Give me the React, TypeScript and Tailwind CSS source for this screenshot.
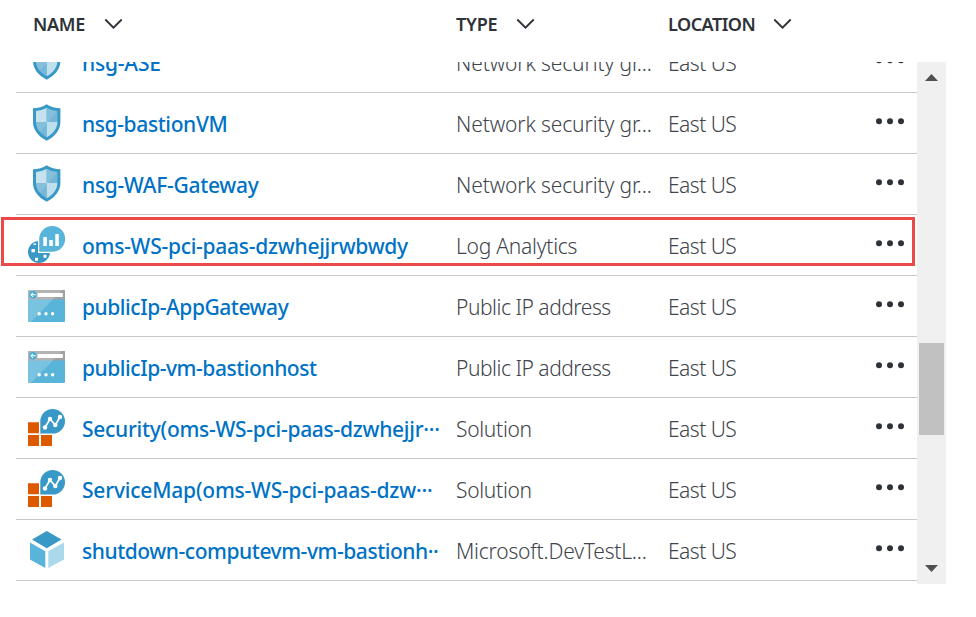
import React from "react";

type IconKind = "shield" | "oms" | "ip" | "solution" | "cube";

interface Resource {
  name: string;
  tracking: string;
  type: string;
  typeTracking: string;
  icon: IconKind;
  selected?: boolean;
}

const resources: Resource[] = [
  { name: "nsg-ASE", tracking: "tracking-[-0.2px]", type: "Network security gr...", typeTracking: "tracking-[-0.12px]", icon: "shield" },
  { name: "nsg-bastionVM", tracking: "tracking-[-0.38px]", type: "Network security gr...", typeTracking: "tracking-[-0.12px]", icon: "shield" },
  { name: "nsg-WAF-Gateway", tracking: "tracking-[-0.27px]", type: "Network security gr...", typeTracking: "tracking-[-0.12px]", icon: "shield" },
  { name: "oms-WS-pci-paas-dzwhejjrwbwdy", tracking: "tracking-[-0.26px]", type: "Log Analytics", typeTracking: "tracking-[-0.25px]", icon: "oms", selected: true },
  { name: "publicIp-AppGateway", tracking: "tracking-[-0.45px]", type: "Public IP address", typeTracking: "tracking-[-0.47px]", icon: "ip" },
  { name: "publicIp-vm-bastionhost", tracking: "tracking-[-0.45px]", type: "Public IP address", typeTracking: "tracking-[-0.47px]", icon: "ip" },
  { name: "Security(oms-WS-pci-paas-dzwhejjr···", tracking: "tracking-[-0.27px]", type: "Solution", typeTracking: "tracking-[-0.3px]", icon: "solution" },
  { name: "ServiceMap(oms-WS-pci-paas-dzw···", tracking: "tracking-[-0.2px]", type: "Solution", typeTracking: "tracking-[-0.3px]", icon: "solution" },
  { name: "shutdown-computevm-vm-bastionh··", tracking: "tracking-[-0.45px]", type: "Microsoft.DevTestL...", typeTracking: "tracking-[-0.2px]", icon: "cube" },
];

function ResourceIcon({ kind }: { kind: IconKind }) {
  return (
    <svg width="37" height="37" viewBox="0 0 37 37" className="block">
      {kind === "shield" && (
        <>
          <path d="M18.7 0.3C15 3 10 4.300 5 4.300V18C5 26 10.500 32.500 18.700 36.700C27 32.500 32.400 26 32.400 18V4.300C27.400 4.300 22.400 3 18.700 0.300Z" fill="#3999c6" />
          <path d="M18.700 3.800C15.500 5.600 11.800 6.700 8 6.900V18H18.700Z" fill="#bfdfed" />
          <path d="M18.700 3.800C21.900 5.600 25.600 6.700 29.400 6.900V18H18.700Z" fill="#74b7d7" />
          <path d="M8 18H18.700V33.300C12.500 29.800 8 24.500 8 18Z" fill="#74b7d7" />
          <path d="M18.700 18H29.400C29.400 24.500 24.900 29.800 18.700 33.300Z" fill="#bfdfed" />
          <path d="M18.700 3.800C15.500 5.600 11.800 6.700 8 6.900V18C8 22 9.800 25.500 12 28L29.400 7C25.600 6.700 21.900 5.600 18.700 3.800Z" fill="#fff" opacity=".12" />
        </>
      )}
      {kind === "oms" && (
        <>
          <circle cx="11" cy="26" r="11" fill="#3999c6" />
          <path d="M24.300 0A12.900 12.900 0 1 1 24.300 25.800H11.200V12.900A13 13 0 0 1 24.300 0Z" fill="#59b4d9" stroke="#fff" strokeWidth="2.400" paintOrder="stroke" />
          <path d="M15.300 11H18.800V20H15.300ZM21.300 14H24.800V20H21.300ZM27.300 8H30.800V20H27.300Z" fill="#fff" />
          <path d="M3.500 23H7V26.200H3.500ZM7 31.700H10V34.800H7ZM15.500 28.700H18.500V31.800H15.500ZM5.500 17.500H8V19H5.500Z" fill="#fff" />
        </>
      )}
      {kind === "ip" && (
        <>
          <rect y="3" width="37" height="32" rx="1" fill="#59b4d9" />
          <path d="M1 3H36Q37 3 37 4V12.500H0V4Q0 3 1 3Z" fill="#a0a1a2" />
          <path d="M1 3H34L3 35H1Q0 35 0 34V4Q0 3 1 3Z" fill="#fff" opacity=".2" />
          <rect x="9.500" y="6" width="25.300" height="4" fill="#fff" />
          <circle cx="4.900" cy="7.800" r="3.700" fill="#3eb0d9" />
          <path d="M7.800 7.800H3M5 5.800L3 7.800L5 9.800" stroke="#fff" strokeWidth="1.100" fill="none" />
          <circle cx="11.200" cy="26.700" r="1.700" fill="#fff" />
          <circle cx="18" cy="26.700" r="1.700" fill="#fff" />
          <circle cx="24.600" cy="26.700" r="1.700" fill="#fff" />
        </>
      )}
      {kind === "solution" && (
        <>
          <path d="M0 13.300H11V24.200H0ZM0 26H11V37H0ZM13 26H24V37H13Z" fill="#dd5900" />
          <path d="M24.700 0A12.300 12.300 0 0 1 24.700 24.600H12.300V12.300A12.300 12.300 0 0 1 24.700 0Z" fill="#3999c6" />
          <path d="M17 18.500L22 10L27.300 16L32 8" stroke="#fff" strokeWidth="1.700" fill="none" />
          <circle cx="17" cy="18.500" r="2.200" fill="#fff" />
          <circle cx="22" cy="10" r="2.200" fill="#fff" />
          <circle cx="27.300" cy="16" r="2.200" fill="#fff" />
          <circle cx="32" cy="8" r="2.200" fill="#fff" />
        </>
      )}
      {kind === "cube" && (
        <>
          <path d="M18.700 0L33.500 8.500L18.700 17.200L4 8.500Z" fill="#3999c6" />
          <path d="M2 11.500L17.300 20.300V37L2 28.500Z" fill="#59b4d9" />
          <path d="M36 11.500L20.300 20.300V37L36 28.500Z" fill="#abd9eb" />
        </>
      )}
    </svg>
  );
}

function HeaderCell({ label, className, labelClass }: { label: string; className: string; labelClass: string }) {
  return (
    <div className={`flex shrink-0 items-center ${className}`}>
      <span className={`shrink-0 ${labelClass}`}>{label}</span>
      <svg width="19" height="12" viewBox="0 0 19 12" className="mb-[2px] shrink-0">
        <path d="M1.300 1.500L9.500 9.700L17.700 1.500" fill="none" stroke="#2d3138" strokeWidth="1.800" />
      </svg>
    </div>
  );
}

function ResourceRow({ item }: { item: Resource }) {
  return (
    <div className="relative ml-4 flex h-[61px] shrink-0 border-b border-[#c8c8c8]">
      <div className="ml-3 mt-[11px] w-[54px] shrink-0">
        <ResourceIcon kind={item.icon} />
      </div>
      <div className={`mt-px w-[374px] shrink-0 whitespace-nowrap text-[21px] leading-[60px] font-medium text-[#0072c6] ${item.tracking}`}>
        {item.name}
      </div>
      <div className={`mt-px w-[212px] shrink-0 whitespace-nowrap text-[21px] leading-[60px] font-[350] text-[#40444b] ${item.typeTracking}`}>
        {item.type}
      </div>
      <div className="mt-px w-[207px] shrink-0 whitespace-nowrap text-[21px] leading-[60px] font-[350] tracking-[-0.52px] text-[#40444b]">
        East US
      </div>
      <svg width="30" height="8" viewBox="0 0 30 8" className="mt-[24px] shrink-0">
        <circle cx="4" cy="4.200" r="3" fill="#2d3138" />
        <circle cx="15" cy="4.200" r="3" fill="#2d3138" />
        <circle cx="26" cy="4.200" r="3" fill="#2d3138" />
      </svg>
      {item.selected && <div className="absolute -left-[15px] top-[2px] h-[49px] w-[914px] border-3 border-[#ea4b48]" />}
    </div>
  );
}

export default function App() {
  return (
    <div className="h-[617px] w-[976px] overflow-hidden bg-white font-['Noto_Sans','Open_Sans',sans-serif]">
      <div className="flex h-[62px] items-start pl-[33px] text-[18px] font-semibold leading-[49px] text-[#2d3138]">
        <HeaderCell label="NAME" className="w-[423px]" labelClass="w-[71px] tracking-[-0.3px]" />
        <HeaderCell label="TYPE" className="w-[212px]" labelClass="w-[60px] tracking-[-0.2px]" />
        <HeaderCell label="LOCATION" className="w-[130px]" labelClass="w-[105px] tracking-[-0.5px]" />
      </div>
      <div className="flex h-[522px] w-[946px]">
        <div className="flex w-[917px] flex-col overflow-hidden">
          <div className="-mt-[30px] flex flex-col">
            {resources.map((item) => (
              <ResourceRow key={item.name} item={item} />
            ))}
          </div>
        </div>
        <div className="flex w-[29px] flex-col items-center bg-[#f0f0f0]">
          <svg width="13" height="7" viewBox="0 0 13 7" className="mt-3">
            <path d="M0 7L6.500 0L13 7Z" fill="#505050" />
          </svg>
          <div className="mt-[262px] h-[92px] w-[25px] bg-[#c1c1c1]" />
          <svg width="13" height="7" viewBox="0 0 13 7" className="mt-[130px]">
            <path d="M0 0H13L6.500 7Z" fill="#505050" />
          </svg>
        </div>
      </div>
    </div>
  );
}
